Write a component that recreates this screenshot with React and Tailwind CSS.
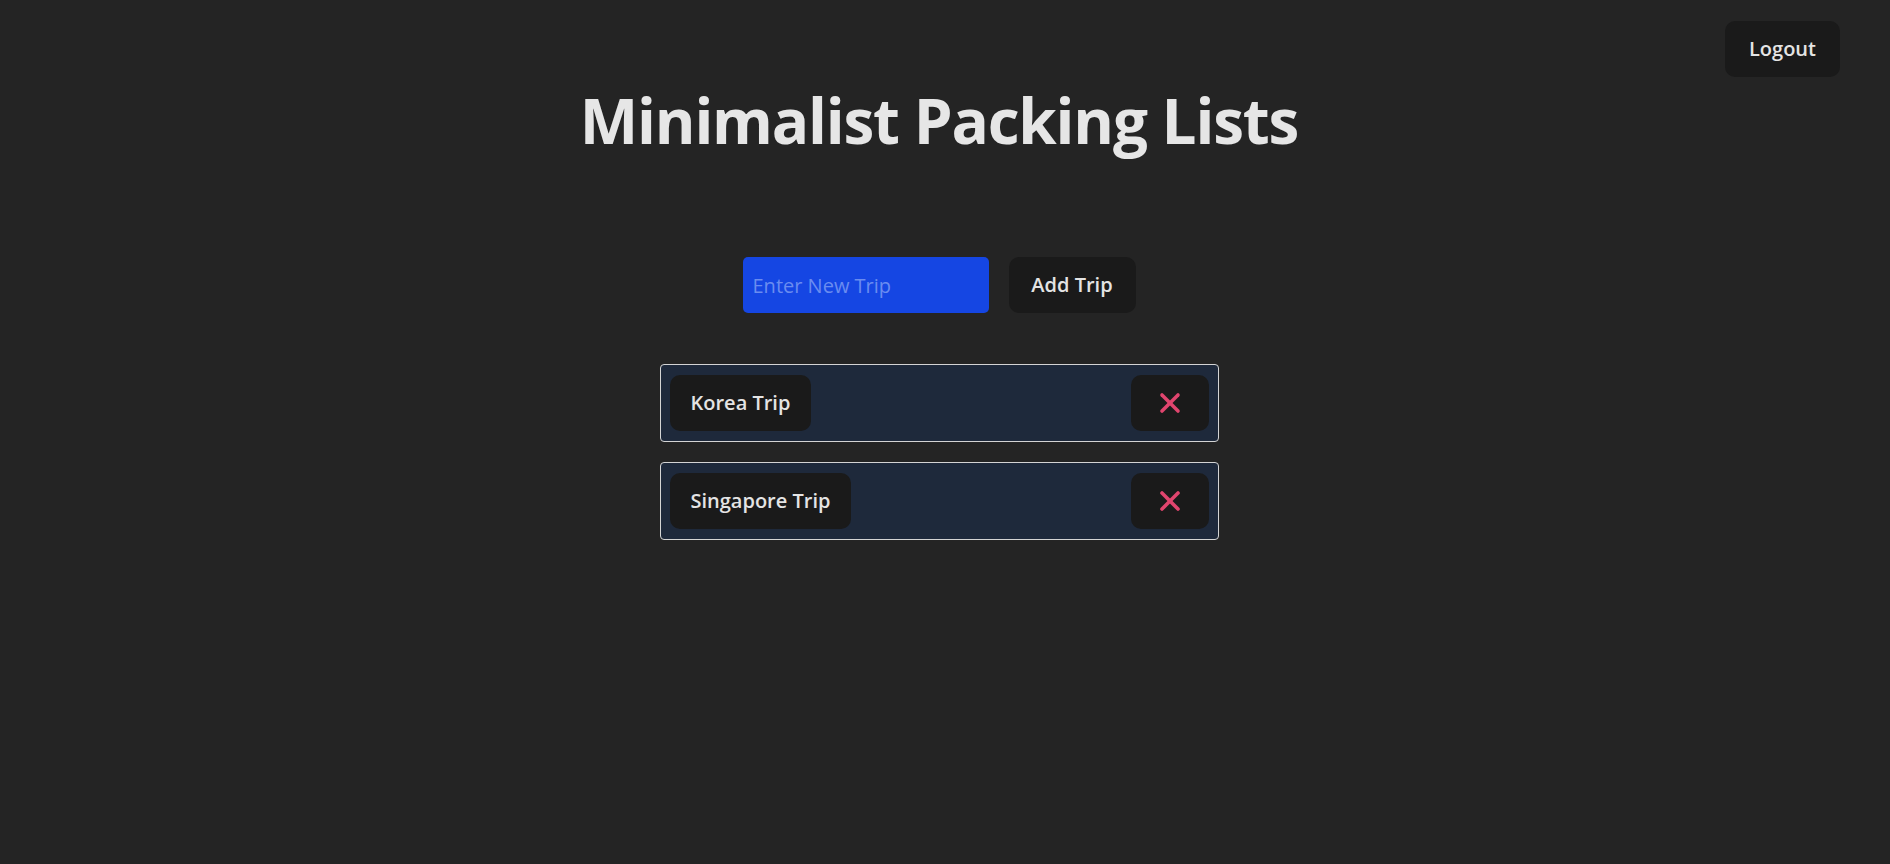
import React, { useState } from 'react';

const XIcon = () => (
  <svg width="22" height="22" viewBox="0 0 22 22" fill="none" stroke="#e0456e" strokeWidth="3.6" strokeLinecap="round">
    <path d="M3 3 L19 19" />
    <path d="M19 3 L3 19" />
  </svg>
);

const TripRow = ({ name, onDelete }) => (
  <div className="flex items-center justify-between border border-[#d4d4d4] rounded-[4px] bg-[#1e293b] p-[9px] py-[10px]">
    <button className="h-[56px] px-[21px] rounded-[10px] bg-[#1a1a1a] text-[20px] font-semibold text-[#e4e4e4]">
      {name}
    </button>
    <button
      onClick={onDelete}
      className="h-[56px] w-[78px] flex items-center justify-center rounded-[10px] bg-[#1a1a1a]"
    >
      <XIcon />
    </button>
  </div>
);

const App = () => {
  const [trips, setTrips] = useState(['Korea Trip', 'Singapore Trip']);
  const [newTrip, setNewTrip] = useState('');

  const addTrip = () => {
    if (!newTrip.trim()) return;
    setTrips([...trips, newTrip.trim()]);
    setNewTrip('');
  };

  return (
    <div className="min-h-[864px] bg-[#242424] text-[#e4e4e4] font-['Open_Sans',sans-serif]">
      <div className="flex justify-end pt-[21px] pr-[50px]">
        <button className="h-[56px] w-[115px] rounded-[10px] bg-[#1a1a1a] text-[20px] font-semibold text-[#e4e4e4]">
          Logout
        </button>
      </div>

      <div className="pr-[12px]">
        <h1 className="mt-[9px] text-center text-[62px] leading-[1.1] tracking-[-1.2px] font-bold text-[#e6e6e6]">
          Minimalist Packing Lists
        </h1>

        <div className="mt-[103px] flex justify-center gap-[20px]">
          <input
            value={newTrip}
            onChange={(e) => setNewTrip(e.target.value)}
            placeholder="Enter New Trip"
            className="h-[56px] w-[246px] rounded-[5px] bg-[#1546e3] pl-[10px] text-[20px] text-[#e4e4e4] placeholder:text-[#6a8cf0] outline-none"
          />
          <button
            onClick={addTrip}
            className="h-[56px] w-[127px] rounded-[10px] bg-[#1a1a1a] text-[20px] font-semibold text-[#e4e4e4]"
          >
            Add Trip
          </button>
        </div>

        <div className="mt-[51px] mx-auto w-[559px] flex flex-col gap-[20px]">
          {trips.map((trip, i) => (
            <TripRow key={trip + i} name={trip} onDelete={() => setTrips(trips.filter((_, j) => j !== i))} />
          ))}
        </div>
      </div>
    </div>
  );
};

export default App;
